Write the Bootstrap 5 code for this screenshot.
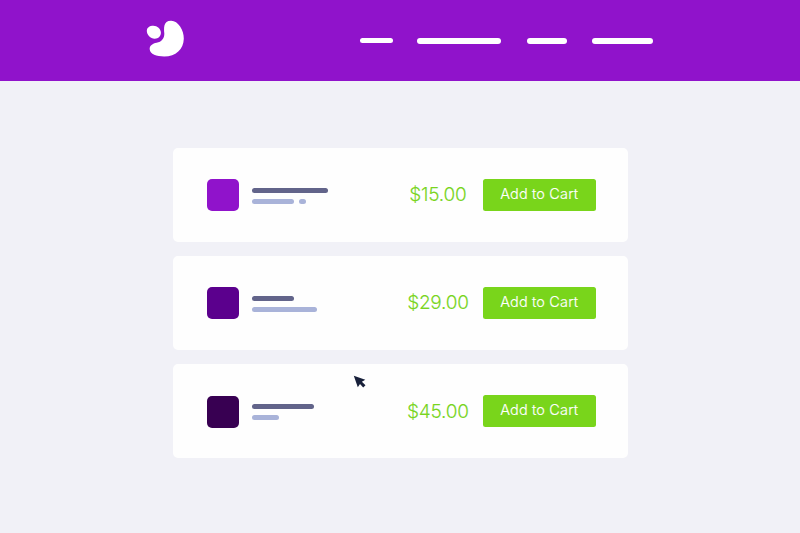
<!DOCTYPE html>
<html lang="en">
<head>
<meta charset="utf-8">
<meta name="viewport" content="width=device-width, initial-scale=1">
<title>Shop</title>
<link href="https://cdn.jsdelivr.net/npm/bootstrap@5.3.0/dist/css/bootstrap.min.css" rel="stylesheet">
<style>
body{background:#f1f1f7;font-family:Inter,"Liberation Sans",sans-serif;height:533px;overflow:hidden}
.topbar{background:#9013cb;height:81px;padding:0 146.7px 0 146px}
.topbar .logo{width:38px;height:37px;margin-top:-4px}
.menu-item{display:block;height:6px;border-radius:4px;background:#fff}
.m1{width:33px;height:5px;margin-right:24px}
.m2{width:84.4px;margin-right:25.2px}
.m3{width:40px;margin-right:25.2px;margin-top:1px}
.m4{width:61.5px}
.products{width:455px;margin:67px auto 0;gap:14.4px;position:relative;left:.4px}
.product{height:93.7px;border:0;border-radius:5px;background:#fefefe;padding:0 32.4px 0 33.8px}
.tile{width:32px;height:32px;border-radius:5px}
.t1{background:#9013cb}.t2{background:#5b008d}.t3{background:#380052;margin-top:1.4px}
.lines{margin-left:13.6px;margin-top:1.8px;gap:6.2px}
.ln{display:block;height:4.8px;border-radius:3px}
.ln-a{background:#62648a}.ln-b{background:#a9b3d9}
.w76{width:76px}.w42{width:42px}.w7{width:7.2px}.w65{width:65px}.w61{width:61.5px}.w27{width:27px}
.dot-gap{gap:4.8px}
.price{width:90px;text-align:center;color:#79d51e;font-weight:300;-webkit-text-stroke:.12px #79d51e;font-size:19px;line-height:24px;letter-spacing:-.25px;margin-top:1px}
.btn-cart{width:112.6px;height:32.4px;border:0;border-radius:2.5px;background:#79d51b;color:#fff;font-weight:300;-webkit-text-stroke:.15px #fff;font-size:14.5px;letter-spacing:.15px;line-height:30px;padding:0 0 1px}
.btn-cart:hover{background:#6cc514;color:#fff}
.pointer{left:353px;top:374.5px;width:13px;height:13px}
</style>
</head>
<body>
<nav class="topbar d-flex align-items-center justify-content-between">
  <svg class="logo" viewBox="0 0 38 37" fill="#fff" aria-hidden="true">
    <path d="M6 5.8C10.5 5 14.8 8.4 14.9 12.6C15 16.4 12.2 18.8 8.6 18.7C4.5 18.6.8 14.8.8 10.8C.8 8 3 6.3 6 5.8Z"/>
    <path d="M25.2.7C32 .8 38 9.9 37.8 18.7C37.6 29.4 29.8 36.4 18.2 36.4C10.6 36.4 4 34 3.7 29.2C3.4 25.6 6.7 23.6 10.6 22.8C15.6 21.8 18.6 18.4 18.3 13.2C18 8.8 17 .6 25.2.7Z"/>
  </svg>
  <div class="d-flex align-items-center">
    <span class="menu-item m1"></span><span class="menu-item m2"></span><span class="menu-item m3"></span><span class="menu-item m4"></span>
  </div>
</nav>
<main class="products d-flex flex-column">
  <div class="card product flex-row align-items-center">
    <div class="tile t1"></div>
    <div class="lines d-flex flex-column">
      <span class="ln ln-a w76"></span>
      <div class="d-flex dot-gap"><span class="ln ln-b w42"></span><span class="ln ln-b w7"></span></div>
    </div>
    <div class="price ms-auto">$15.00</div>
    <button class="btn btn-cart" type="button">Add to Cart</button>
  </div>
  <div class="card product flex-row align-items-center">
    <div class="tile t2"></div>
    <div class="lines d-flex flex-column">
      <span class="ln ln-a w42"></span><span class="ln ln-b w65"></span>
    </div>
    <div class="price ms-auto">$29.00</div>
    <button class="btn btn-cart" type="button">Add to Cart</button>
  </div>
  <div class="card product flex-row align-items-center">
    <div class="tile t3"></div>
    <div class="lines d-flex flex-column">
      <span class="ln ln-a w61"></span><span class="ln ln-b w27"></span>
    </div>
    <div class="price ms-auto">$45.00</div>
    <button class="btn btn-cart" type="button">Add to Cart</button>
  </div>
</main>
<svg class="pointer position-absolute" viewBox="0 0 13 13" fill="#18203a" aria-hidden="true"><path d="M.8.8L12.3 4.7L8.9 6.8L12.5 10.2L10.2 12.5L7 9L4.8 12.2Z"/></svg>
<script src="https://cdn.jsdelivr.net/npm/bootstrap@5.3.0/dist/js/bootstrap.bundle.min.js"></script>
</body>
</html>
